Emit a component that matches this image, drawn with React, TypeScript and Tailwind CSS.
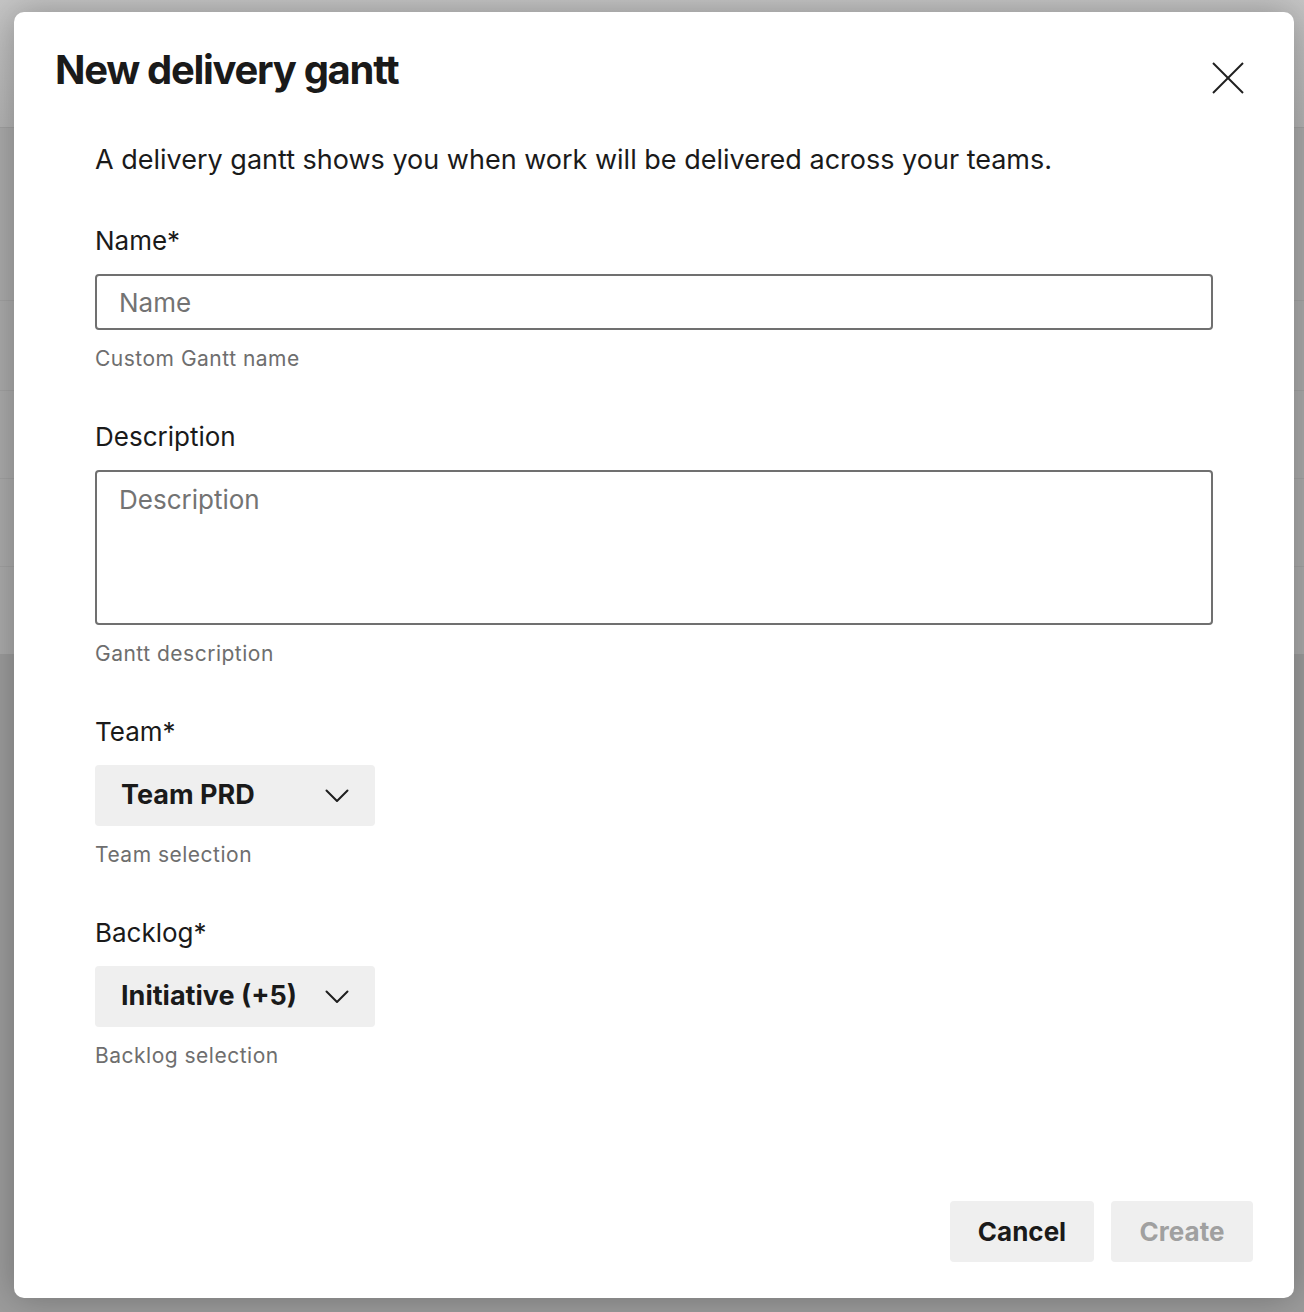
import React from 'react';

const font = { fontFamily: 'Inter, "Noto Sans", sans-serif' };

const Chevron = () => (
  <svg width="24" height="14" viewBox="0 0 24 14" fill="none" className="shrink-0">
    <polyline points="1.5,1.5 12,12 22.5,1.5" stroke="#1f1f1f" strokeWidth="2" strokeLinecap="round" strokeLinejoin="round" />
  </svg>
);

const Field = ({ label, help, children }: { label: string; help: string; children: React.ReactNode }) => (
  <div className="flex flex-col">
    <label className="text-[26px] leading-[36px] text-[#1a1a1a]">{label}</label>
    <div className="mt-[15px]">{children}</div>
    <p className="mt-[15px] text-[21px] leading-[28px] tracking-[0.5px] text-[#6e6e6e]">{help}</p>
  </div>
);

const Dropdown = ({ value }: { value: string }) => (
  <button className="flex h-[61px] w-[280px] items-center justify-between rounded-[4px] bg-[#efefef] pl-[26px] pr-[26px] text-[27px] font-bold text-[#1a1a1a]">
    <span>{value}</span>
    <Chevron />
  </button>
);

export default function App() {
  return (
    <div className="relative h-[1312px] w-[1304px] overflow-hidden bg-[#9c9c9c]" style={font}>
      {/* page behind the overlay */}
      <div className="flex flex-col">
        <div className="h-[127px] bg-gradient-to-b from-[#c6c6c6] to-[#b4b4b4]" />
        <div className="h-[173px] border-t border-[#a2a2a2] bg-[#ababab]" />
        <div className="h-[90px] border-t border-[#a2a2a2] bg-[#ababab]" />
        <div className="h-[88px] border-t border-[#a2a2a2] bg-[#ababab]" />
        <div className="h-[88px] border-t border-[#a2a2a2] bg-[#ababab]" />
        <div className="h-[88px] border-t border-[#a2a2a2] bg-[#ababab]" />
      </div>

      {/* modal */}
      <div className="absolute left-[14px] top-[12px] flex h-[1286px] w-[1280px] flex-col rounded-[10px] bg-white shadow-[0_0_36px_rgba(0,0,0,0.28)]">
        <div className="flex items-start justify-between pl-[41px] pr-[50px] pt-[34px]">
          <h1 className="text-[40px] font-bold leading-[48px] tracking-[-1.3px] text-[#1a1a1a]">New delivery gantt</h1>
          <button className="mt-[16px] flex h-[32px] w-[32px] items-center justify-center">
            <svg width="32" height="32" viewBox="0 0 32 32" fill="none">
              <line x1="1" y1="1" x2="31" y2="31" stroke="#1f1f1f" strokeWidth="2" />
              <line x1="31" y1="1" x2="1" y2="31" stroke="#1f1f1f" strokeWidth="2" />
            </svg>
          </button>
        </div>

        <div className="flex flex-col gap-[46px] px-[81px] pt-[49px]">
          <p className="-mt-[1px] text-[27px] leading-[36px] text-[#1a1a1a]">
            A delivery gantt shows you when work will be delivered across your teams.
          </p>

          <div className="-mt-[1px] flex flex-col gap-[46px]">
            <Field label="Name*" help="Custom Gantt name">
              <input
                placeholder="Name"
                className="h-[56px] w-full rounded-[4px] border-2 border-[#707070] px-[22px] text-[26px] text-[#1a1a1a] outline-none placeholder:text-[#737373]"
              />
            </Field>

            <Field label="Description" help="Gantt description">
              <textarea
                placeholder="Description"
                className="block h-[155px] w-full resize-none rounded-[4px] border-2 border-[#707070] px-[22px] py-[10px] text-[26px] leading-[36px] text-[#1a1a1a] outline-none placeholder:text-[#737373]"
              />
            </Field>

            <Field label="Team*" help="Team selection">
              <Dropdown value="Team PRD" />
            </Field>

            <Field label="Backlog*" help="Backlog selection">
              <Dropdown value="Initiative (+5)" />
            </Field>
          </div>
        </div>

        <div className="mt-auto flex justify-end gap-[17px] pb-[36px] pr-[41px]">
          <button className="h-[61px] w-[144px] rounded-[4px] bg-[#efefef] text-[26px] font-bold text-[#1a1a1a]">Cancel</button>
          <button className="h-[61px] w-[142px] rounded-[4px] bg-[#efefef] text-[26px] font-bold text-[#a0a0a0]">Create</button>
        </div>
      </div>
    </div>
  );
}
